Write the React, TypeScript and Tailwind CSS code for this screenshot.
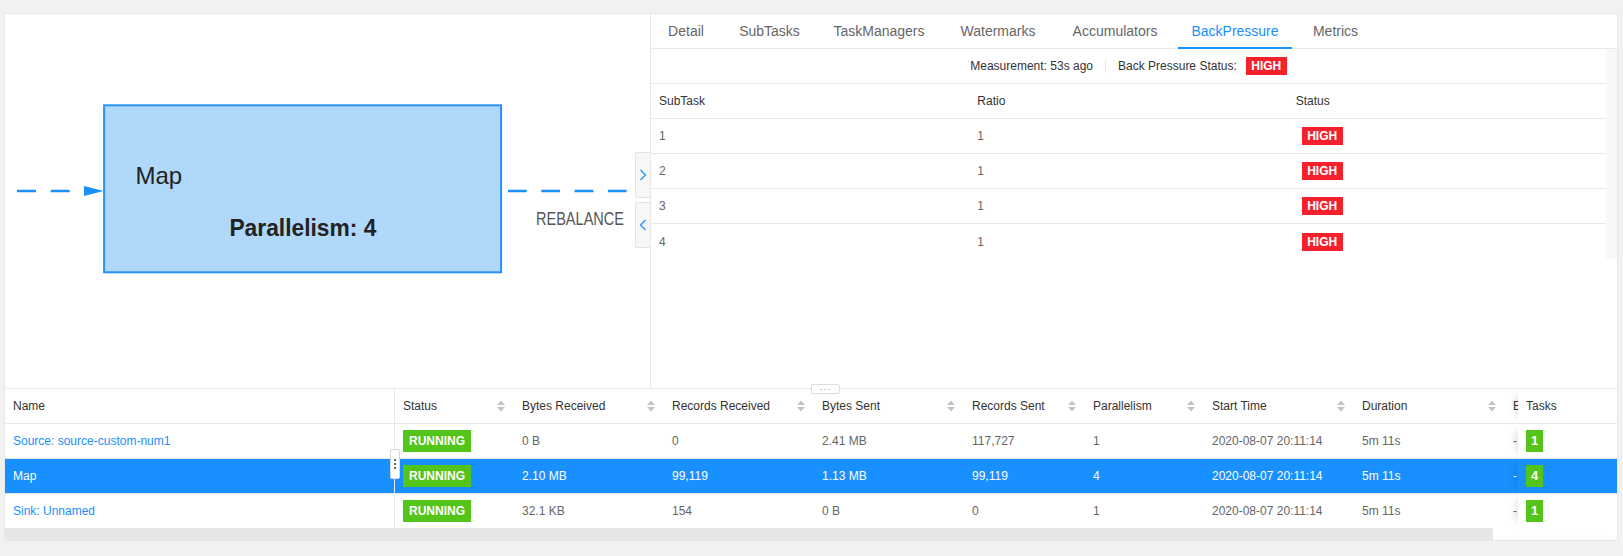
import React from "react";

const TABS = [
  { label: "Detail", w: "w-[70px]" },
  { label: "SubTasks", w: "w-[89px]" },
  { label: "TaskManagers", w: "w-[122px]" },
  { label: "Watermarks", w: "w-[108px]" },
  { label: "Accumulators", w: "w-[118px]" },
  { label: "BackPressure", w: "w-[114px]", active: true },
  { label: "Metrics", w: "w-[79px]" },
];

const COLS = [
  { label: "Status", w: "w-[119px]" },
  { label: "Bytes Received", w: "w-[150px]" },
  { label: "Records Received", w: "w-[150px]" },
  { label: "Bytes Sent", w: "w-[150px]" },
  { label: "Records Sent", w: "w-[121px]" },
  { label: "Parallelism", w: "w-[119px]" },
  { label: "Start Time", w: "w-[150px]" },
  { label: "Duration", w: "w-[151px]" },
  { label: "End Time", w: "w-[150px]" },
];

interface Vertex {
  name: string;
  values: string[]; // bytes recv, records recv, bytes sent, records sent, parallelism, start, duration, end
  tasks: number;
  selected?: boolean;
}

const VERTICES: Vertex[] = [
  {
    name: "Source: source-custom-num1",
    values: ["0 B", "0", "2.41 MB", "117,727", "1", "2020-08-07 20:11:14", "5m 11s", "-"],
    tasks: 1,
  },
  {
    name: "Map",
    values: ["2.10 MB", "99,119", "1.13 MB", "99,119", "4", "2020-08-07 20:11:14", "5m 11s", "-"],
    tasks: 4,
    selected: true,
  },
  {
    name: "Sink: Unnamed",
    values: ["32.1 KB", "154", "0 B", "0", "1", "2020-08-07 20:11:14", "5m 11s", "-"],
    tasks: 1,
  },
];

function SortIcon() {
  return (
    <svg width="8" height="12" viewBox="0 0 8 12" className="shrink-0">
      <path d="M0 5 L4 0.5 L8 5 Z" fill="#c4c4c4" />
      <path d="M0 7 L4 11.5 L8 7 Z" fill="#c4c4c4" />
    </svg>
  );
}

function HighBadge() {
  return (
    <span className="inline-flex h-[18px] w-[41px] items-center justify-center bg-[#f5222d] text-[12px] font-bold text-white">
      HIGH
    </span>
  );
}

function GraphPanel() {
  return (
    <div className="relative w-[646px] shrink-0 border-r border-[#e8e8e8]">
      <svg className="absolute left-0 top-0" width="645" height="374">
        <line x1="12" y1="177" x2="79" y2="177" stroke="#1890ff" strokeWidth="2.5" strokeDasharray="19 14.7" />
        <polygon points="79,172 98.5,177 79,182" fill="#1890ff" />
        <rect x="99.1" y="91.3" width="397" height="167" fill="#b0d8fb" stroke="#2a92f6" strokeWidth="2" />
        <text x="130.5" y="170" fontSize="24" fill="#222">
          Map
        </text>
        <text
          x="224.4"
          y="221.7"
          fontSize="24"
          fontWeight="700"
          fill="#222"
          textLength="147"
          lengthAdjust="spacingAndGlyphs"
        >
          Parallelism: 4
        </text>
        <line x1="503" y1="177" x2="622" y2="177" stroke="#1890ff" strokeWidth="2.5" strokeDasharray="18.7 14.6" />
        <text x="531" y="211" fontSize="18" fill="#555" textLength="88" lengthAdjust="spacingAndGlyphs">
          REBALANCE
        </text>
      </svg>

      <div className="absolute right-0 top-[138px] flex h-[46px] w-[15px] items-center justify-center rounded-l-[2px] border border-r-0 border-[#e3e3e3] bg-[#f7f7f7]">
        <svg width="8" height="12" viewBox="0 0 8 12">
          <path d="M1.5 1 L6.5 6 L1.5 11" fill="none" stroke="#1890ff" strokeWidth="1.2" />
        </svg>
      </div>
      <div className="absolute right-0 top-[188px] flex h-[46px] w-[15px] items-center justify-center rounded-l-[2px] border border-r-0 border-[#e3e3e3] bg-[#f7f7f7]">
        <svg width="8" height="12" viewBox="0 0 8 12">
          <path d="M6.5 1 L1.5 6 L6.5 11" fill="none" stroke="#1890ff" strokeWidth="1.2" />
        </svg>
      </div>
    </div>
  );
}

function BackPressurePanel() {
  return (
    <div className="flex min-w-0 flex-1 flex-col">
      <div className="flex h-[35px] shrink-0 gap-[4px] border-b border-[#e8e8e8]">
        {TABS.map(t => (
          <div
            key={t.label}
            className={`relative flex shrink-0 items-center justify-center text-[14px] ${t.w} ${
              t.active ? "text-[#1890ff]" : "text-[#666]"
            }`}
          >
            {t.label}
            {t.active && <span className="absolute bottom-[-1px] left-0 h-[2px] w-full bg-[#1890ff]" />}
          </div>
        ))}
      </div>

      <div className="flex h-[210px]">
        <div className="min-w-0 flex-1">
          <div className="flex h-[35px] items-center justify-center border-b border-[#e8e8e8] text-[12px] text-[#333]">
            <span>Measurement: 53s ago</span>
            <span className="mx-3 h-[14px] w-px bg-[#e8e8e8]" />
            <span className="mr-[9px]">Back Pressure Status:</span>
            <HighBadge />
          </div>
          <div className="flex h-[35px] items-center border-b border-[#e8e8e8] text-[12px] text-[#333]">
            <div className="flex-1 px-2">SubTask</div>
            <div className="flex-1 px-2">Ratio</div>
            <div className="flex-1 px-2">Status</div>
          </div>
          {[1, 2, 3, 4].map(n => (
            <div
              key={n}
              className={`flex h-[35px] items-center text-[12px] text-[#666] ${n < 4 ? "border-b border-[#e8e8e8]" : ""}`}
            >
              <div className="flex-1 px-2">{n}</div>
              <div className="flex-1 px-2">1</div>
              <div className="flex-1 px-2">
                <span className="ml-[6px] inline-flex">
                  <HighBadge />
                </span>
              </div>
            </div>
          ))}
        </div>
        <div className="w-[11px] shrink-0 bg-[#f8f8f8]" />
      </div>
    </div>
  );
}

function VertexTable() {
  return (
    <div className="text-[12px]">
      {/* header */}
      <div className="flex h-[35px] border-b border-[#e8e8e8] text-[#333]">
        <div className="flex w-[390px] shrink-0 items-center border-r border-[#e8e8e8] px-2">Name</div>
        <div className="min-w-0 flex-1 overflow-hidden">
          <div className="flex h-full">
            {COLS.map(c => (
              <div key={c.label} className={`flex shrink-0 items-center justify-between pl-2 pr-[9px] ${c.w}`}>
                <span className="whitespace-nowrap">{c.label}</span>
                <SortIcon />
              </div>
            ))}
          </div>
        </div>
        <div className="relative z-10 flex w-[99px] shrink-0 items-center bg-white pl-2 shadow-[-8px_0_8px_-6px_rgba(0,0,0,0.12)]">
          Tasks
        </div>
      </div>

      {VERTICES.map((v, i) => {
        const last = i === VERTICES.length - 1;
        const sel = v.selected;
        return (
          <div
            key={v.name}
            className={`flex ${last ? "h-[34px]" : "h-[35px] border-b border-[#e8e8e8]"} ${
              sel ? "bg-[#1890ff] text-white" : "bg-white text-[#666]"
            }`}
          >
            <div
              className={`flex w-[390px] shrink-0 items-center border-r border-[#e8e8e8] px-2 ${
                sel ? "text-white" : "text-[#1890ff]"
              }`}
            >
              {v.name}
            </div>
            <div className="min-w-0 flex-1 overflow-hidden">
              <div className="flex h-full">
                <div className="flex w-[119px] shrink-0 items-center px-2">
                  <span className="inline-flex h-[22px] items-center bg-[#52c41a] px-[6px] text-[12px] font-bold text-white">
                    RUNNING
                  </span>
                </div>
                {v.values.map((val, j) => (
                  <div
                    key={j}
                    className={`flex shrink-0 items-center whitespace-nowrap px-2 ${COLS[j + 1].w}`}
                  >
                    {val}
                  </div>
                ))}
              </div>
            </div>
            <div
              className={`relative z-10 flex w-[99px] shrink-0 items-center pl-2 shadow-[-8px_0_8px_-6px_rgba(0,0,0,0.12)] ${
                sel ? "bg-[#1890ff]" : "bg-white"
              }`}
            >
              <span className="inline-flex h-[22px] w-[17px] items-center justify-center bg-[#52c41a] text-[13px] font-bold text-white">
                {v.tasks}
              </span>
            </div>
          </div>
        );
      })}

      {/* horizontal scrollbar */}
      <div className="flex h-[12px]">
        <div className="w-[1488px] bg-[#e6e6e6]" />
        <div className="flex-1 bg-white" />
      </div>
    </div>
  );
}

export default function App() {
  return (
    <div className="min-h-screen bg-[#f1f1f1] pl-[4px] pt-[13px] font-['Liberation_Sans',Arial,sans-serif]">
      <div className="relative w-[1614px] border border-[#e8e8e8] bg-white">
        <div className="flex h-[375px] border-b border-[#e8e8e8]">
          <GraphPanel />
          <BackPressurePanel />
        </div>

        <VertexTable />

        {/* resize handles */}
        <div className="absolute left-[806px] top-[370px] z-20 flex h-[10px] w-[29px] items-center justify-center rounded-[2px] border border-[#dcdcdc] bg-white text-[9px] leading-none tracking-[1px] text-[#888]">
          ···
        </div>
        <div className="absolute left-[385px] top-[435px] z-20 flex h-[30px] w-[10px] flex-col items-center justify-center gap-[2px] rounded-[2px] border border-[#d9d9d9] bg-white">
          <span className="h-[2px] w-[2px] bg-[#666]" />
          <span className="h-[2px] w-[2px] bg-[#666]" />
          <span className="h-[2px] w-[2px] bg-[#666]" />
        </div>
      </div>
    </div>
  );
}
